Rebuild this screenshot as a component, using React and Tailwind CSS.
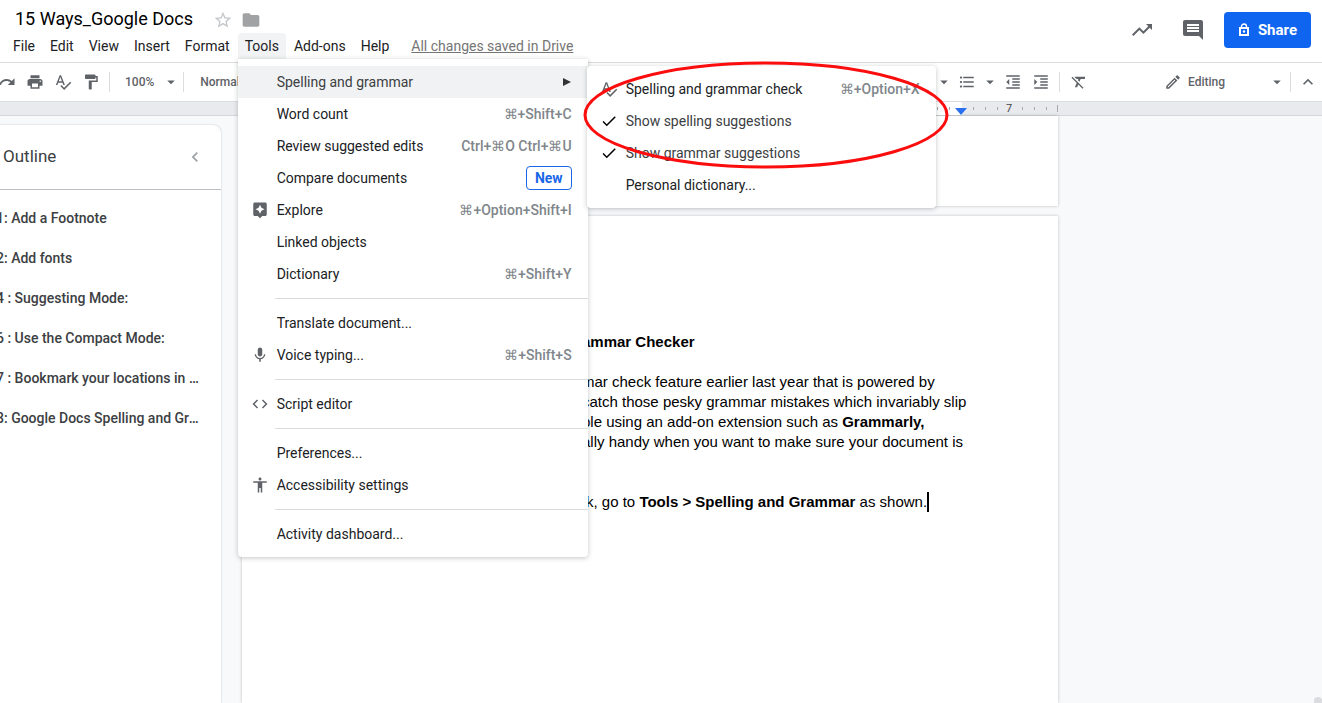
import {
  MdStarBorder,
  MdFolder,
  MdRedo,
  MdPrint,
  MdSpellcheck,
  MdFormatPaint,
  MdArrowDropDown,
  MdFormatListBulleted,
  MdFormatIndentDecrease,
  MdFormatIndentIncrease,
  MdFormatClear,
  MdOutlineModeEdit,
  MdKeyboardArrowUp,
  MdTrendingUp,
  MdComment,
  MdAssistant,
  MdMic,
  MdCode,
  MdAccessibility,
  MdCheck,
  MdChevronLeft,
} from "react-icons/md";

const toolsMenu = [
  [
    { label: "Spelling and grammar", submenu: true },
    { label: "Word count", keys: "⌘+Shift+C" },
    { label: "Review suggested edits", keys: "Ctrl+⌘O Ctrl+⌘U" },
    { label: "Compare documents", badge: "New" },
    { label: "Explore", keys: "⌘+Option+Shift+I", icon: MdAssistant },
    { label: "Linked objects" },
    { label: "Dictionary", keys: "⌘+Shift+Y" },
  ],
  [
    { label: "Translate document..." },
    { label: "Voice typing...", keys: "⌘+Shift+S", icon: MdMic },
  ],
  [{ label: "Script editor", icon: MdCode }],
  [
    { label: "Preferences..." },
    { label: "Accessibility settings", icon: MdAccessibility },
  ],
  [{ label: "Activity dashboard..." }],
];

const spellingMenu = [
  { label: "Spelling and grammar check", keys: "⌘+Option+X", icon: MdSpellcheck },
  { label: "Show spelling suggestions", checked: true },
  { label: "Show grammar suggestions", checked: true },
  { label: "Personal dictionary..." },
];

const outline = [
  "1: Add a Footnote",
  "2: Add fonts",
  "4 : Suggesting Mode:",
  "6 : Use the Compact Mode:",
  "7 : Bookmark your locations in the document",
  "8: Google Docs Spelling and Grammar Checker",
];

function MenuRow({ item, children }) {
  const Icon = item.checked ? MdCheck : item.icon;
  return (
    <li className="relative">
      <button
        className={`flex h-8 w-full items-center pr-4 text-left ${
          item.submenu ? "bg-[#f1f2f3] text-[#3c4043]" : item.checked ? "text-[#3c4043]" : "text-[#202124]"
        }`}
      >
        <span className="flex w-[39px] shrink-0 justify-center pl-1.5">
          {Icon && <Icon size={18} className={item.checked ? "text-black" : "text-[#5f6368]"} />}
        </span>
        <span className="flex-1 whitespace-nowrap">{item.label}</span>
        {item.keys && <span className="whitespace-nowrap font-medium text-[#80868b]">{item.keys}</span>}
        {item.badge && (
          <span className="flex h-6 items-center rounded border border-[#1a66e8] px-2 font-bold text-[#1a66e8]">
            {item.badge}
          </span>
        )}
        {item.submenu && (
          <svg width="9" height="8" viewBox="0 0 9 8" fill="#333">
            <path d="M0 0 L8 4 L0 8 Z" />
          </svg>
        )}
      </button>
      {children}
    </li>
  );
}

function SpellingSubmenu() {
  return (
    <div className="absolute left-[349px] top-0 w-[349px] rounded bg-white py-[7px] shadow-[0_1px_5px_rgba(60,64,67,0.3)]">
      <ul>
        {spellingMenu.map((item) => (
          <MenuRow key={item.label} item={item} />
        ))}
      </ul>
      <svg
        className="pointer-events-none absolute -left-1 -top-1.5"
        width="368"
        height="110"
        viewBox="0 0 368 110"
        fill="none"
      >
        <ellipse cx="183" cy="55" rx="181" ry="52" stroke="#fb0d0d" strokeWidth="3" />
      </svg>
    </div>
  );
}

function ToolsMenu() {
  return (
    <div className="absolute left-0 top-full z-20 w-[350px] rounded-b bg-white py-[7px] shadow-[0_1px_5px_rgba(60,64,67,0.3)]">
      {toolsMenu.map((group, i) => (
        <ul key={i} className={i > 0 ? "mt-2" : ""}>
          {i > 0 && <li className="mb-2 ml-[37px] h-px bg-[#dadce0]" />}
          {group.map((item) => (
            <MenuRow key={item.label} item={item}>
              {item.submenu && <SpellingSubmenu />}
            </MenuRow>
          ))}
        </ul>
      ))}
    </div>
  );
}

function MenuButton({ children }) {
  return <button className="h-[26px] px-[7px]">{children}</button>;
}

function LockIcon() {
  return (
    <svg width="12" height="14" viewBox="0 0 12 14" fill="none" stroke="currentColor">
      <rect x="2" y="5" width="8" height="7" strokeWidth="2" />
      <path d="M3.5 5 V3.5 A2.5 2.5 0 0 1 8.5 3.5 V5" strokeWidth="1.4" />
      <circle cx="6" cy="8.5" r="1.2" fill="currentColor" stroke="none" />
    </svg>
  );
}

function Header() {
  return (
    <header className="flex h-[63px] shrink-0 justify-between border-b border-[#dadce0] pr-[11px]">
      <div className="pt-1.5">
        <div className="flex h-[27px] items-center pl-[15px]">
          <h1 className="pb-0.5 text-lg leading-6 text-black">15 Ways_Google Docs</h1>
          <button aria-label="Star" className="ml-5 text-[#c4c7ca]">
            <MdStarBorder size={20} />
          </button>
          <button aria-label="Move to folder" className="ml-2 text-[#a0a2a4]">
            <MdFolder size={20} />
          </button>
        </div>
        <nav className="flex items-center gap-px pl-1.5 text-sm text-[#202124]">
          <MenuButton>File</MenuButton>
          <MenuButton>Edit</MenuButton>
          <MenuButton>View</MenuButton>
          <MenuButton>Insert</MenuButton>
          <MenuButton>Format</MenuButton>
          <div className="relative">
            <button className="block h-[26px] rounded-t bg-[#f1f3f4] px-[7px]">Tools</button>
            <ToolsMenu />
          </div>
          <MenuButton>Add-ons</MenuButton>
          <MenuButton>Help</MenuButton>
          <a href="#history" className="ml-3.5 text-[#757575] underline">
            All changes saved in Drive
          </a>
        </nav>
      </div>
      <div className="flex h-[60px] items-center text-[#5f6368]">
        <button aria-label="Activity">
          <MdTrendingUp size={24} />
        </button>
        <button aria-label="Comments" className="ml-[27px]">
          <MdComment size={24} />
        </button>
        <button className="ml-[19px] flex h-9 items-center gap-2 rounded bg-[#1065f0] px-3.5 font-bold text-white">
          <LockIcon />
          <span className="text-[15px]">Share</span>
        </button>
      </div>
    </header>
  );
}

function Tool({ icon: Icon, label, size = 18 }) {
  return (
    <button aria-label={label} className="flex w-7 shrink-0 justify-center">
      <Icon size={size} />
    </button>
  );
}

function Divider({ className = "" }) {
  return <span className={`h-5 w-px shrink-0 bg-[#dadce0] ${className}`} />;
}

function Toolbar() {
  return (
    <div className="flex h-[39px] shrink-0 items-center border-b border-[#dadce0] text-xs font-medium text-[#5f6368]">
      <div className="-ml-[7px] flex items-center">
        <Tool icon={MdRedo} label="Redo" />
        <Tool icon={MdPrint} label="Print" />
        <Tool icon={MdSpellcheck} label="Spelling and grammar check" />
        <Tool icon={MdFormatPaint} label="Paint format" />
        <Divider className="ml-1" />
        <button className="ml-[15px] flex items-center">
          100%
          <MdArrowDropDown size={18} className="ml-2" />
        </button>
        <Divider className="ml-[3px]" />
        <button className="ml-4 whitespace-nowrap">Normal text</button>
      </div>
      <div className="ml-auto flex items-center">
        <MdArrowDropDown size={18} />
        <Tool icon={MdFormatListBulleted} label="Bulleted list" />
        <MdArrowDropDown size={18} />
        <Tool icon={MdFormatIndentDecrease} label="Decrease indent" />
        <Tool icon={MdFormatIndentIncrease} label="Increase indent" />
        <Divider className="ml-1 mr-[5px]" />
        <Tool icon={MdFormatClear} label="Clear formatting" />
        <button className="ml-[71px] flex w-[122px] items-center">
          <MdOutlineModeEdit size={18} />
          <span className="ml-1.5 flex-1 text-left">Editing</span>
          <MdArrowDropDown size={18} />
        </button>
        <Divider className="ml-1 mr-[3px]" />
        <Tool icon={MdKeyboardArrowUp} label="Hide the menus" size={20} />
      </div>
    </div>
  );
}

function Ruler() {
  return (
    <div className="flex h-3.5 shrink-0 border-b border-[#d5d7da] bg-[#e8eaed] pl-[338px]">
      <div className="relative flex w-[624px] justify-end bg-white">
        <svg width="36" height="13" viewBox="0 0 36 13" stroke="#a5a8ac">
          <path d="M11.5 5 V8 M23.5 5 V8" />
        </svg>
        <svg className="absolute -right-[5px] top-1.5" width="12" height="7" viewBox="0 0 12 7">
          <path d="M0 0 H12 L6 7 Z" fill="#2a6ff0" />
        </svg>
      </div>
      <svg width="97" height="13" viewBox="0 0 97 13" stroke="#a5a8ac">
        {[11, 23, 35, 60, 72, 84].map((x) => (
          <path key={x} d={`M${x + 0.5} 5 V8`} />
        ))}
        <path d="M95.5 3 V10" />
        <text x="47" y="10" textAnchor="middle" fontSize="11" stroke="none" fill="#444" className="font-[Roboto]">
          7
        </text>
      </svg>
    </div>
  );
}

function Outline() {
  return (
    <aside className="mt-[9px] w-[221px] shrink-0 rounded-tr-lg bg-white shadow-[0_0_2px_rgba(60,64,67,0.3)]">
      <div className="flex h-[65px] items-center justify-between border-b border-[#bdc1c6] pl-[3px] pr-4">
        <h2 className="text-[17px] text-[#3c4043]">Outline</h2>
        <button aria-label="Close outline" className="text-[#9aa0a6]">
          <MdChevronLeft size={20} />
        </button>
      </div>
      <ul className="-ml-1 pr-5 pt-2 text-sm font-medium text-[#3c4043]">
        {outline.map((item) => (
          <li key={item} className="h-10 truncate leading-10">
            {item}
          </li>
        ))}
      </ul>
    </aside>
  );
}

function Page() {
  return (
    <article className="min-h-0 flex-1 bg-white pl-[340px] pt-[116px] font-['Liberation_Sans',Arial,sans-serif] text-[15px] leading-5 text-black shadow-[0_0_3px_rgba(60,64,67,0.3)]">
      <h3 className="font-bold">ammar Checker</h3>
      <p className="mt-5 whitespace-nowrap">
        mar check feature earlier last year that is powered by
        <br />
        catch those pesky grammar mistakes which invariably slip
        <br />
        ble using an add-on extension such as <b>Grammarly,</b>
        <br />
        ally handy when you want to make sure your document is
      </p>
      <p className="mt-10 flex whitespace-pre pl-1">
        k, go to <b>Tools &gt; Spelling and Grammar</b> as shown.
        <span className="h-5 w-0.5 bg-black" />
      </p>
    </article>
  );
}

export default function App() {
  return (
    <div className="relative flex h-screen flex-col overflow-hidden bg-white font-[Roboto,sans-serif]">
      <Header />
      <Toolbar />
      <Ruler />
      <main className="flex min-h-0 flex-1 bg-[#f8f9fb]">
        <Outline />
        <div className="ml-[21px] flex w-[816px] shrink-0 flex-col">
          <div className="mb-[10px] h-[90px] shrink-0 bg-white shadow-[0_0_3px_rgba(60,64,67,0.3)]" />
          <Page />
        </div>
      </main>
      <span className="absolute bottom-0 right-0 h-1.5 w-2 rounded-t bg-[#dadce0]" />
    </div>
  );
}
